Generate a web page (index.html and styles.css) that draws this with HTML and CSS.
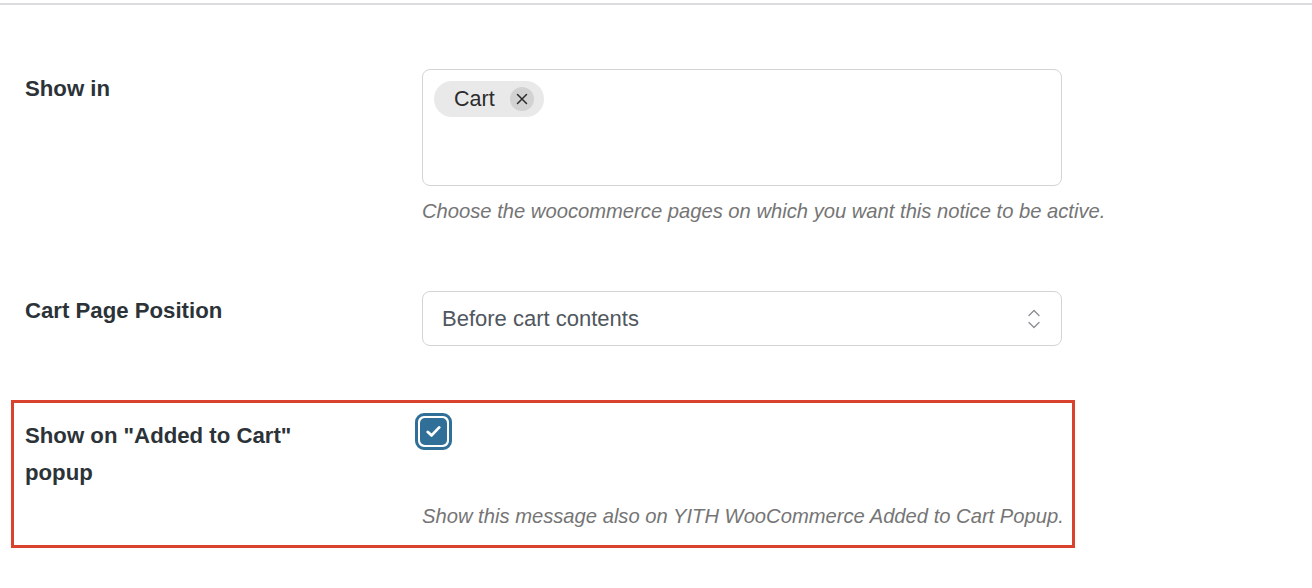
FILE: index.html
```html
<!DOCTYPE html>
<html lang="en">
<head>
<meta charset="utf-8">
<title>Notice settings</title>
<link rel="stylesheet" href="styles.css">
</head>
<body>
<div class="rule"></div>
<div class="form">
  <div class="row row-show-in">
    <div class="label">Show in</div>
    <div class="field">
      <div class="multiselect">
        <span class="chip">Cart<span class="chip-x"><svg width="12" height="12" viewBox="0 0 12 12"><path d="M1.5 1.5 L10.5 10.5 M10.5 1.5 L1.5 10.5" stroke="#2c2c2c" stroke-width="1.5" fill="none" stroke-linecap="round"/></svg></span></span>
      </div>
      <div class="desc">Choose the woocommerce pages on which you want this notice to be active.</div>
    </div>
  </div>

  <div class="row row-position">
    <div class="label">Cart Page Position</div>
    <div class="field">
      <div class="select">
        <span>Before cart contents</span>
        <svg class="arrows" width="14" height="22" viewBox="0 0 14 22"><path d="M2 7.5 L7 2.5 L12 7.5 M2 14.5 L7 19.5 L12 14.5" stroke="#8c8f94" stroke-width="1.4" fill="none" stroke-linecap="round" stroke-linejoin="round"/></svg>
      </div>
    </div>
  </div>

  <div class="row row-popup">
    <div class="label label-narrow">Show on "Added to Cart" popup</div>
    <div class="field">
      <div class="checkbox-ring">
        <div class="checkbox">
          <svg width="15" height="13" viewBox="0 0 15 13"><path d="M1.8 7 L5.6 10.4 L13.2 2.4" stroke="#fff" stroke-width="2.8" fill="none" stroke-linecap="round" stroke-linejoin="round"/></svg>
        </div>
      </div>
      <div class="desc desc-popup">Show this message also on YITH WooCommerce Added to Cart Popup.</div>
    </div>
  </div>
</div>
</body>
</html>
```

FILE: styles.css
```css
html, body {
  margin: 0;
  padding: 0;
  background: #ffffff;
}

body {
  font-family: "Liberation Sans", Arial, sans-serif;
  color: #2c3338;
  width: 1312px;
  height: 588px;
  overflow: hidden;
}

.rule {
  height: 2px;
  margin-top: 3px;
  background: #dcdcde;
}

.form {
  padding-top: 64px;
}

.row {
  display: flex;
  align-items: flex-start;
  padding-left: 25px;
}

.label {
  width: 397px;
  flex: none;
  box-sizing: border-box;
  padding-top: 1px;
  font-size: 22.2px;
  font-weight: 700;
  line-height: 37px;
  color: #2c3338;
}

.label-narrow {
  padding-right: 80px;
}

.field {
  width: 640px;
  flex: none;
}

.multiselect {
  box-sizing: border-box;
  height: 117px;
  border: 1px solid #d4d4d6;
  border-radius: 8px;
  padding: 11px 0 0 11px;
}

.chip {
  display: inline-flex;
  align-items: center;
  height: 36px;
  padding: 0 10px 0 20px;
  border-radius: 18px;
  background: #e9e9e9;
  font-size: 21.5px;
  color: #2c2c2c;
}

.chip-x {
  display: inline-flex;
  align-items: center;
  justify-content: center;
  width: 24px;
  height: 24px;
  margin-left: 15px;
  border-radius: 50%;
  background: #d2d2d2;
}

.desc {
  margin-top: 12px;
  font-size: 20.2px;
  font-style: italic;
  line-height: 26px;
  color: #757575;
  white-space: nowrap;
}

.row-position {
  margin-top: 67px;
}

.select {
  box-sizing: border-box;
  height: 55px;
  border: 1px solid #d4d4d6;
  border-radius: 8px;
  padding: 0 20px 0 19px;
  display: flex;
  align-items: center;
  justify-content: space-between;
  font-size: 22px;
  color: #50575e;
}

.arrows {
  display: block;
  margin-top: 1px;
}

.row-popup {
  margin: 54px 0 0 11px;
  width: 1064px;
  box-sizing: border-box;
  border: 3px solid #d9432e;
  padding: 10px 0 16px 11px;
}

.row-popup .label {
  padding-top: 4px;
}

.checkbox-ring {
  box-sizing: border-box;
  width: 37px;
  height: 37px;
  margin-left: -7px;
  border: 3px solid #2f6f98;
  border-radius: 9px;
  padding: 2px;
}

.checkbox {
  width: 100%;
  height: 100%;
  border-radius: 5px;
  background: #2f6f98;
  display: flex;
  align-items: center;
  justify-content: center;
}

.desc-popup {
  margin-top: 53px;
}
```
